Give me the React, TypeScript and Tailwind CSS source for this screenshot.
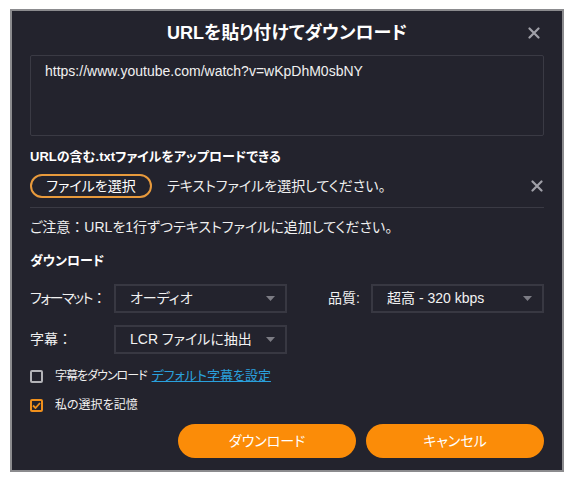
import React from "react";

const font = { fontFamily: '"Liberation Sans", "Noto Sans CJK JP", sans-serif' };

function Caret() {
  return (
    <svg width="9" height="5" viewBox="0 0 9 5" className="shrink-0">
      <path d="M0 0 L9 0 L4.5 5 Z" fill="#7c7c84" />
    </svg>
  );
}

function Select({ value, width }: { value: string; width: string }) {
  return (
    <div
      className={`${width} h-[29px] flex items-center justify-between border-2 border-[#383842] pl-[14px] pr-[10px] text-[14px] text-[#f2f2f2]`}
    >
      <span className="whitespace-nowrap">{value}</span>
      <Caret />
    </div>
  );
}

function CloseIcon({ size = 12 }: { size?: number }) {
  return (
    <svg width={size} height={size} viewBox="0 0 12 12">
      <path d="M1.5 1.5 L10.5 10.5 M10.5 1.5 L1.5 10.5" stroke="#a0a0a8" strokeWidth="2.2" strokeLinecap="round" />
    </svg>
  );
}

// full-width colon, kept at full width (palt would squeeze it)
const Colon = () => <span className="[font-feature-settings:normal]">：</span>;

export default function App() {
  return (
    <div className="w-[574px] h-[482px] bg-white pl-[10px] pt-[9px] [font-feature-settings:'palt']" style={font}>
      <div className="w-[554px] h-[463px] border-2 border-[#8b8b8e] bg-[#23232d] px-[18px] text-[#f0f0f0]">
        <div className="relative pt-[10px] text-center">
          <h1 className="text-[18px] leading-[24px] font-bold text-white">URLを貼り付けてダウンロード</h1>
          <button className="absolute right-[4px] top-[16px]">
            <CloseIcon />
          </button>
        </div>

        <div className="mt-[10px] h-[81px] border border-[#3a3a44] rounded-[2px] px-[14px] pt-[5px] text-[14px] leading-[20px]">
          https://www.youtube.com/watch?v=wKpDhM0sbNY
        </div>

        <p className="mt-[12px] text-[13px] leading-[18px] font-bold text-white">URLの含む.txtファイルをアップロードできる</p>

        <div className="mt-[8px] flex items-center">
          <button className="w-[122px] h-[24px] rounded-full border-2 border-[#e89a3c] text-[14px] leading-[18px] text-white">
            ファイルを選択
          </button>
          <span className="ml-[15px] text-[14px]">テキストファイルを選択してください。</span>
          <span className="ml-auto mr-[1px] flex">
            <CloseIcon />
          </span>
        </div>

        <div className="mt-[9px] h-px bg-[#3a3a44]" />

        <p className="mt-[9px] text-[14px] leading-[20px]">
          ご注意<Colon />URLを1行ずつテキストファイルに追加してください。
        </p>

        <p className="mt-[15px] text-[13px] leading-[18px] font-bold text-white">ダウンロード</p>

        <div className="mt-[14px] flex items-center">
          <span className="w-[84px] shrink-0 whitespace-nowrap text-[14px] tracking-[-1.5px]">
            フォーマット<span className="ml-[4px]">：</span>
          </span>
          <Select value="オーディオ" width="w-[173px]" />
          <span className="ml-[41px] w-[43px] shrink-0 whitespace-nowrap text-[14px]">品質:</span>
          <Select value="超高 - 320 kbps" width="w-[173px]" />
        </div>

        <div className="mt-[12px] flex items-center">
          <span className="w-[84px] shrink-0 text-[14px]">
            字幕<Colon />
          </span>
          <Select value="LCR ファイルに抽出" width="w-[173px]" />
        </div>

        <div className="mt-[14px] flex items-center text-[12px] leading-[16px]">
          <span className="w-[13px] h-[13px] border-2 border-[#b4b4b8] rounded-[2px]" />
          <span className="ml-[12px] tracking-[-1px]">字幕をダウンロード</span>
          <a className="ml-[5px] text-[13px] text-[#2aa0dc] underline">デフォルト字幕を設定</a>
        </div>

        <div className="mt-[13px] flex items-center text-[12px] leading-[16px]">
          <span className="w-[13px] h-[13px] border-2 border-[#f0901c] rounded-[2px] flex items-center justify-center">
            <svg width="9" height="7" viewBox="0 0 9 7">
              <path d="M1 3.5 L3.5 6 L8 1" stroke="#f0901c" strokeWidth="1.8" fill="none" />
            </svg>
          </span>
          <span className="ml-[12px]">私の選択を記憶</span>
        </div>

        <div className="mt-[11px] flex justify-end gap-[10px]">
          <button className="w-[178px] h-[34px] rounded-full bg-[#fb8c08] text-[14px] text-white">ダウンロード</button>
          <button className="w-[178px] h-[34px] rounded-full bg-[#fb8c08] text-[14px] text-white">キャンセル</button>
        </div>
      </div>
    </div>
  );
}
